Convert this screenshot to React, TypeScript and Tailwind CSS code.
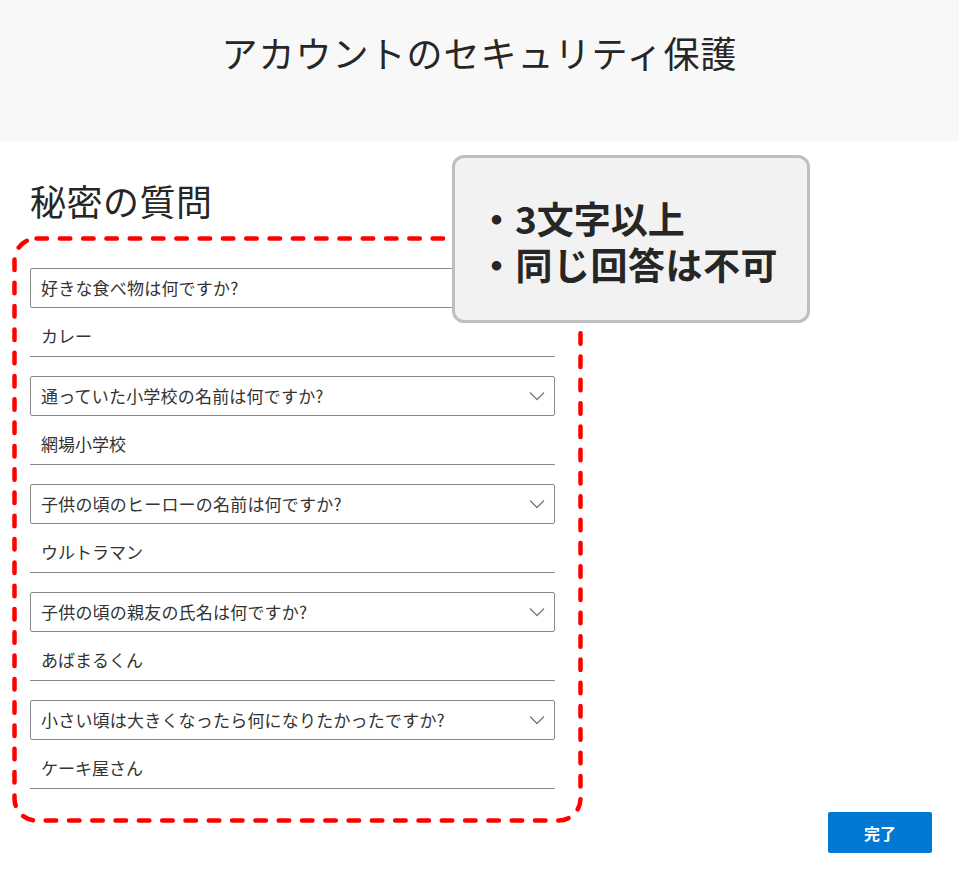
import React from "react";

const FONT = { fontFamily: '"Noto Sans CJK JP", "Noto Sans", sans-serif' };

const items = [
  { q: "好きな食べ物は何ですか?", a: "カレー", chevron: false },
  { q: "通っていた小学校の名前は何ですか?", a: "網場小学校", chevron: true },
  { q: "子供の頃のヒーローの名前は何ですか?", a: "ウルトラマン", chevron: true },
  { q: "子供の頃の親友の氏名は何ですか?", a: "あばまるくん", chevron: true },
  { q: "小さい頃は大きくなったら何になりたかったですか?", a: "ケーキ屋さん", chevron: true },
];

function Chevron() {
  return (
    <svg width="16" height="10" viewBox="0 0 16 10" fill="none">
      <path d="M1 1.5 L8 8.5 L15 1.5" stroke="#7a7a7a" strokeWidth="1.3" />
    </svg>
  );
}

export default function App() {
  return (
    <div className="relative w-[959px] h-[875px] bg-white text-[#262626]" style={FONT}>
      <header className="h-[141px] bg-[#f8f8f8] flex justify-center pt-[32px]">
        <h1 className="text-[36px] leading-[40px] font-normal tracking-[1px]">アカウントのセキュリティ保護</h1>
      </header>

      <main className="pl-[12px] pt-[39px]">
        <h2 className="ml-[18px] text-[36px] leading-[40px] font-normal tracking-[0.5px]">秘密の質問</h2>
        <div className="relative mt-[16px] w-[571px] h-[587px] pt-[32px] pl-[18px]">
          <svg className="absolute inset-0 pointer-events-none" width="571" height="587" viewBox="0 0 571 587" fill="none">
            <rect
              x="2.5"
              y="2.5"
              width="566"
              height="582"
              rx="22"
              stroke="#ff0000"
              strokeWidth="4.5"
              strokeDasharray="10.5 12.8"
              strokeLinecap="round"
            />
          </svg>
          <div className="relative flex flex-col gap-[19px] w-[525px]">
            {items.map((it, i) => (
              <div key={i} className="flex flex-col">
                <div className="h-[40px] border border-[#8a8a8a] rounded-[2px] flex items-center justify-between pl-[10px] pr-[9px] text-[17px] text-[#333]">
                  <span className="tracking-[0.2px]">{it.q}</span>
                  {it.chevron && <Chevron />}
                </div>
                <div className="h-[49px] border-b border-[#8a8a8a] flex items-center pt-[8px] pl-[11px] text-[17px] text-[#333]">
                  {it.a}
                </div>
              </div>
            ))}
          </div>
        </div>
        <div className="flex justify-end pr-[27px] -mt-[11px]">
          <button className="w-[104px] h-[41px] bg-[#0078d4] text-white text-[16px] font-bold rounded-[2px]">完了</button>
        </div>
      </main>

      <div className="absolute left-[452px] top-[155px] w-[358px] h-[168px] bg-[#f2f2f2] border-[3px] border-[#bfbfbf] rounded-[12px] pl-[23px] pt-[37px] text-[37px] leading-[46px] font-bold text-[#262626]">
        <div>・3文字以上</div>
        <div className="tracking-[0.5px]">・同じ回答は不可</div>
      </div>
    </div>
  );
}
